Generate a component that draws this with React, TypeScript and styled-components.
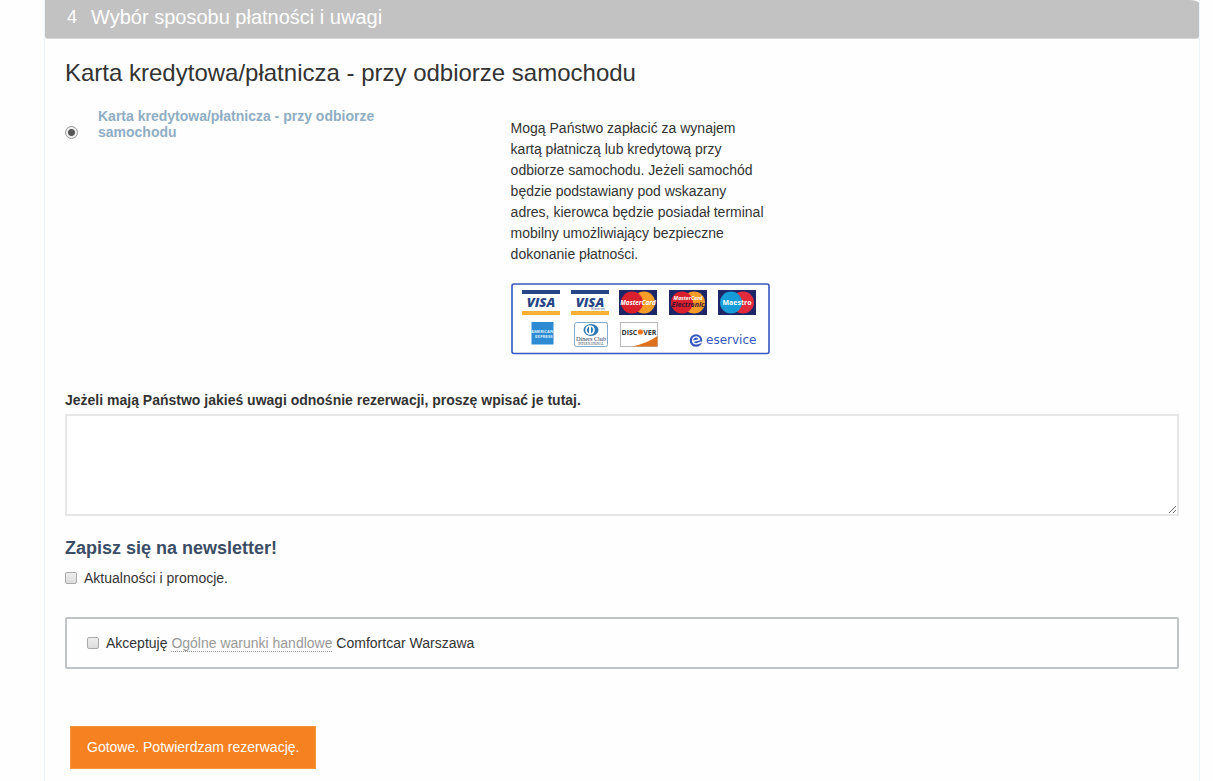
import React from "react";
import styled, { createGlobalStyle } from "styled-components";

const GlobalStyle = createGlobalStyle`
  * { box-sizing: border-box; }
  body {
    margin: 0;
    background: #fefefe;
    color: #333;
    font: 14px/21px "Liberation Sans", Arial, sans-serif;
  }
  h2, h3, h4, p { margin: 0; }
`;

const Page = styled.main`
  padding: 0 13px 0 44px;
`;

const Panel = styled.section`
  border: solid #eff4f8;
  border-width: 0 1px;
  min-height: 100vh;
`;

const StepHeader = styled.h2`
  display: flex;
  align-items: center;
  gap: 14px;
  height: 39px;
  padding: 0 22px 4px;
  border-bottom: 1px solid #d6d6d6;
  border-radius: 0 10px 3px 3px / 0 3px 3px 3px;
  background: #c2c2c2;
  color: #fff;
  font-size: 20px;
  font-weight: 400;
`;

const StepNumber = styled.span`
  font-size: 18px;
`;

const Form = styled.form`
  display: flex;
  flex-direction: column;
  padding: 18px 20px 12px;
`;

const MethodTitle = styled.h3`
  font-size: 24px;
  line-height: 32px;
  font-weight: 400;
`;

const Method = styled.div`
  display: grid;
  grid-template-columns: 40% 258px;
  margin-top: 19px;
`;

const MethodChoice = styled.label`
  display: flex;
  align-items: center;
  align-self: start;
  gap: 20px;
  max-width: 340px;
  color: #8fadc4;
  font-weight: 700;
  line-height: 16px;
`;

const Radio = styled.input`
  appearance: none;
  flex: none;
  width: 13px;
  height: 13px;
  margin: 16px 0 0;
  border: 1px solid #999;
  border-radius: 50%;
  background: #eee;
  &:checked {
    background: radial-gradient(circle, #555 0 3px, #eee 4px);
  }
`;

const MethodInfo = styled.div`
  padding-top: 10px;
`;

const MethodText = styled.p`
  line-height: 21px;
`;

const Logos = styled.svg`
  display: block;
  margin-top: 18px;
`;

const NotesLabel = styled.label`
  margin-top: 35px;
  font-weight: 700;
`;

const Notes = styled.textarea`
  width: 100%;
  height: 102px;
  margin-top: 3px;
  padding: 8px;
  border: 2px solid #e6e6e6;
  background: #fff;
  font: inherit;
  resize: vertical;
`;

const NewsletterTitle = styled.h4`
  margin-top: 20px;
  color: #3b4d65;
  font-size: 18px;
  line-height: 24px;
`;

const CheckLabel = styled.label`
  display: flex;
  align-items: center;
  gap: 7px;
`;

const Newsletter = styled.div`
  margin-top: 8px;
`;

const Checkbox = styled.input`
  appearance: none;
  flex: none;
  width: 12px;
  height: 12px;
  margin: 0 0 2px;
  border: 1px solid #aaa;
  border-radius: 2px;
  background: linear-gradient(#eee, #dcdcdc);
  &:checked { background: #555; }
`;

const Terms = styled.div`
  margin-top: 28px;
  padding: 14px 20px 13px;
  border: 2px solid #bfc3c7;
  border-radius: 2px;
`;

const TermsLink = styled.a`
  border-bottom: 1px dotted #999;
  color: #999;
  text-decoration: none;
`;

const Submit = styled.button`
  align-self: flex-start;
  height: 43px;
  margin: 57px 5px 0;
  padding: 0 16px;
  border: 1px solid #f8963f;
  background: #f68121;
  color: #fff;
  font: inherit;
  cursor: pointer;
`;

const brandFont = '"Open Sans", "Liberation Sans", sans-serif';

function Visa({ x, electron = false }: { x: number; electron?: boolean }) {
  return (
    <g transform={`translate(${x} 7)`}>
      <rect width="38" height="4" fill="#284687" />
      <rect y="21" width="38" height="4" fill="#fbb034" />
      <text x="19" y="16.5" textAnchor="middle" fontFamily={brandFont} fontSize="13" fontWeight="800" fontStyle="italic" fill="#284687">VISA</text>
      {electron && <text x="34" y="20.3" textAnchor="end" fontFamily={brandFont} fontSize="3.6" fill="#284687">Electron</text>}
    </g>
  );
}

function Circles({ x, left, right, children }: { x: number; left: string; right: string; children: React.ReactNode }) {
  return (
    <g transform={`translate(${x} 7)`}>
      <rect width="38" height="25" fill="#1d2768" />
      <circle cx="25" cy="12.5" r="11" fill={right} />
      <circle cx="13" cy="12.5" r="11" fill={left} />
      <g fontFamily={brandFont} fontWeight="700" fontStyle="italic" textAnchor="middle">{children}</g>
    </g>
  );
}

function CardLogos() {
  return (
    <Logos width="259" height="72" viewBox="0 0 259 72" role="img" aria-label="Visa, MasterCard, Maestro, American Express, Diners Club, Discover, eService">
      <rect x="1" y="1" width="257" height="69.5" rx="2" fill="#fff" stroke="#3658be" strokeWidth="1.6" />
      <Visa x={11} />
      <Visa x={60} electron />
      <Circles x={108} left="#d9202d" right="#f89c28">
        <text x="19" y="15" fontSize="6.4" fill="#fff">MasterCard</text>
      </Circles>
      <Circles x={158} left="#d9202d" right="#f89c28">
        <text x="19" y="9.5" fontSize="5.2" fill="#fff">MasterCard</text>
        <text x="19" y="16.5" fontSize="7" fill="#3c1436">Electronic</text>
      </Circles>
      <Circles x={207} left="#159bd8" right="#e12b3c">
        <text x="19" y="15" fontSize="7" fontStyle="normal" fill="#fff">Maestro</text>
      </Circles>
      <g transform="translate(19 39)">
        <path d="M1.5 0H23.5V22.5H1.5z" fill="#2c8bd2" />
        <g fontFamily={brandFont} fontSize="4.2" fontWeight="700" fill="#dceefa">
          <text x="1" y="10.5">AMERICAN</text>
          <text x="5" y="15.5">EXPRESS</text>
        </g>
      </g>
      <g transform="translate(63 39)">
        <rect x=".5" y=".5" width="33" height="24" rx="2" fill="#fff" stroke="#83aaca" />
        <ellipse cx="17" cy="8" rx="7.5" ry="6" fill="#2c78b5" />
        <circle cx="16" cy="8" r="4.8" fill="#fff" />
        <path d="M15 4.5a4 4 0 0 0 0 7zM17 4.5a4 4 0 0 1 0 7z" fill="#2c78b5" />
        <text x="17" y="18.5" textAnchor="middle" fontFamily='"Liberation Serif", serif' fontSize="6.2" fill="#263b61">Diners Club</text>
        <text x="17" y="22.8" textAnchor="middle" fontFamily='"Liberation Serif", serif' fontSize="3.2" fill="#263b61">INTERNATIONAL</text>
      </g>
      <g transform="translate(109 39)">
        <rect x=".5" y=".5" width="37" height="24" fill="#fff" stroke="#aaa" strokeWidth=".8" />
        <path d="M37.5 14v10.5H12Q28 21 37.5 14z" fill="#df711c" />
        <text x="1.5" y="12.5" fontFamily={brandFont} fontSize="7" fontWeight="700" fill="#333">DISC</text>
        <circle cx="20.4" cy="10" r="2.6" fill="#ed741b" />
        <text x="23.2" y="12.5" fontFamily={brandFont} fontSize="7" fontWeight="700" fill="#333">VER</text>
      </g>
      <circle cx="185" cy="57.5" r="6.3" fill="#3658be" />
      <path d="M181.5 58.5l7-1.8a3.5 3.5 0 1 0-1.8 3.8l4-1.5" fill="none" stroke="#fff" strokeWidth="1.4" />
      <text x="195" y="61" fontFamily='"DejaVu Sans", sans-serif' fontSize="12" fill="#3658be">eservice</text>
    </Logos>
  );
}

export default function App() {
  return (
    <>
      <GlobalStyle />
      <Page>
        <Panel>
          <StepHeader>
            <StepNumber>4</StepNumber>
            <span>Wybór sposobu płatności i uwagi</span>
          </StepHeader>
          <Form onSubmit={(e) => e.preventDefault()}>
            <MethodTitle>Karta kredytowa/płatnicza - przy odbiorze samochodu</MethodTitle>
            <Method>
              <MethodChoice>
                <Radio type="radio" name="payment" defaultChecked />
                <span>Karta kredytowa/płatnicza - przy odbiorze samochodu</span>
              </MethodChoice>
              <MethodInfo>
                <MethodText>
                  Mogą Państwo zapłacić za wynajem kartą płatniczą lub kredytową przy odbiorze samochodu. Jeżeli samochód
                  będzie podstawiany pod wskazany adres, kierowca będzie posiadał terminal mobilny umożliwiający
                  bezpieczne dokonanie płatności.
                </MethodText>
                <CardLogos />
              </MethodInfo>
            </Method>
            <NotesLabel htmlFor="notes">Jeżeli mają Państwo jakieś uwagi odnośnie rezerwacji, proszę wpisać je tutaj.</NotesLabel>
            <Notes id="notes" />
            <NewsletterTitle>Zapisz się na newsletter!</NewsletterTitle>
            <Newsletter>
              <CheckLabel>
                <Checkbox type="checkbox" />
                <span>Aktualności i promocje.</span>
              </CheckLabel>
            </Newsletter>
            <Terms>
              <CheckLabel>
                <Checkbox type="checkbox" />
                <span>
                  Akceptuję <TermsLink href="#terms">Ogólne warunki handlowe</TermsLink> Comfortcar Warszawa
                </span>
              </CheckLabel>
            </Terms>
            <Submit type="submit">Gotowe. Potwierdzam rezerwację.</Submit>
          </Form>
        </Panel>
      </Page>
    </>
  );
}
